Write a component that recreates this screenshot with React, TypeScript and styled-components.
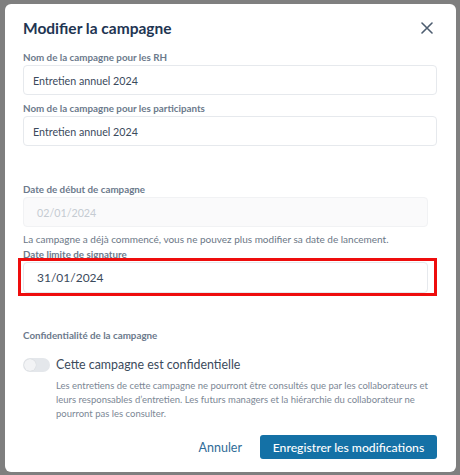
import styled, { createGlobalStyle } from "styled-components";

const GlobalStyle = createGlobalStyle`
  html, body {
    margin: 0;
    padding: 0;
    background: #7f7f7f;
  }
  * {
    box-sizing: border-box;
  }
  body {
    font-family: Lato, "Noto Sans", sans-serif;
  }
`;

function App() {
  return (
    <>
      <GlobalStyle />
      <Overlay>
        <Modal>
          <Header>
            <Title>Modifier la campagne</Title>
            <CloseButton aria-label="Fermer">
              <svg width="12" height="12" viewBox="0 0 12 12">
                <path
                  d="M1 1 L11 11 M11 1 L1 11"
                  stroke="#4d5d70"
                  strokeWidth="1.6"
                  strokeLinecap="round"
                />
              </svg>
            </CloseButton>
          </Header>

          <Field>
            <Label>Nom de la campagne pour les RH</Label>
            <Input>Entretien annuel 2024</Input>
          </Field>
          <Field>
            <Label>Nom de la campagne pour les participants</Label>
            <Input>Entretien annuel 2024</Input>
          </Field>

          <DateSection>
            <Field>
              <Label>Date de début de campagne</Label>
              <Input disabled>02/01/2024</Input>
              <Helper>
                La campagne a déjà commencé, vous ne pouvez plus modifier sa date
                de lancement.
              </Helper>
            </Field>
            <Field>
              <Label>Date limite de signature</Label>
              <Highlight>
                <Input date>31/01/2024</Input>
              </Highlight>
            </Field>
          </DateSection>

          <Confidential>
            <Label>Confidentialité de la campagne</Label>
            <ToggleRow>
              <Toggle>
                <Knob />
              </Toggle>
              <ToggleText>Cette campagne est confidentielle</ToggleText>
            </ToggleRow>
            <Description>
              Les entretiens de cette campagne ne pourront être consultés que
              par les collaborateurs et leurs responsables d’entretien. Les
              futurs managers et la hiérarchie du collaborateur ne pourront pas
              les consulter.
            </Description>
          </Confidential>

          <Footer>
            <TextButton>Annuler</TextButton>
            <PrimaryButton>Enregistrer les modifications</PrimaryButton>
          </Footer>
        </Modal>
      </Overlay>
    </>
  );
}

export default App;

const Overlay = styled.div`
  height: 475px;
  padding: 4px 4px 3px 5px;
`;

const Modal = styled.div`
  width: 451px;
  height: 468px;
  background: #ffffff;
  border-radius: 6px;
  padding: 0 19px 0 18px;
  display: flex;
  flex-direction: column;
`;

const Header = styled.div`
  display: flex;
  align-items: center;
  justify-content: space-between;
  height: 26px;
  margin-top: 11px;
  margin-bottom: 9px;
`;

const Title = styled.h2`
  margin: 0;
  font-size: 15.5px;
  font-weight: 700;
  color: #1e3552;
`;

const CloseButton = styled.button`
  border: none;
  background: none;
  padding: 0;
  width: 20px;
  height: 20px;
  display: flex;
  align-items: center;
  justify-content: center;
`;

const Field = styled.div`
  display: flex;
  flex-direction: column;
  margin-bottom: 6px;
`;

const Label = styled.label`
  font-size: 9.8px;
  font-weight: 700;
  color: #6c7a8c;
  line-height: 15px;
`;

const Input = styled.div<{ disabled?: boolean; date?: boolean }>`
  height: ${(p) => (p.date ? "31px" : "30px")};
  display: flex;
  align-items: center;
  padding-left: ${(p) => (p.disabled || p.date ? "13px" : "9px")};
  border: 1px solid ${(p) => (p.disabled ? "#f1f2f4" : "#e6e9ed")};
  border-radius: 4px;
  background: ${(p) => (p.disabled ? "#fafafb" : "#ffffff")};
  color: ${(p) => (p.disabled ? "#c5cbd2" : "#3b4a5c")};
  font-size: ${(p) => (p.date ? "12px" : "10.7px")};
`;

const DateSection = styled.div`
  margin-top: 30px;
  padding-right: 9px;
  ${Field}:first-child {
    margin-bottom: 0;
  }
`;

const Helper = styled.p`
  margin: 5px 0 0;
  font-size: 10px;
  line-height: 15px;
  color: #6b7786;
`;

const Highlight = styled.div`
  margin: -4px -9px 0 -5px;
  padding: 1px 6px 0 2px;
  border: 3px solid #ee0d0d;
  height: 38px;
`;

const Confidential = styled.div`
  margin-top: 26px;
  display: flex;
  flex-direction: column;
`;

const ToggleRow = styled.div`
  display: flex;
  align-items: center;
  gap: 6px;
  margin-top: 14px;
`;

const Toggle = styled.div`
  width: 27px;
  height: 14px;
  border-radius: 7px;
  background: #e4e7eb;
  padding: 1px;
  display: flex;
  align-items: center;
`;

const Knob = styled.div`
  width: 12px;
  height: 12px;
  border-radius: 50%;
  background: #f2f3f5;
  box-shadow: 0 0 1px rgba(0, 0, 0, 0.15);
`;

const ToggleText = styled.span`
  font-size: 12.4px;
  color: #3b4a5c;
`;

const Description = styled.p`
  margin: 7px 0 0 33px;
  font-size: 9.5px;
  line-height: 14px;
  color: #7c8795;
`;

const Footer = styled.div`
  display: flex;
  justify-content: flex-end;
  align-items: center;
  gap: 18px;
  margin-top: 14px;
`;

const TextButton = styled.button`
  border: none;
  background: none;
  padding: 0;
  font-family: inherit;
  font-size: 12.5px;
  color: #2f6c98;
`;

const PrimaryButton = styled.button`
  border: none;
  background: #1471a6;
  color: #ffffff;
  height: 24px;
  width: 177px;
  border-radius: 3px;
  font-family: inherit;
  font-size: 12.2px;
  font-weight: 500;
  padding: 0;
`;
